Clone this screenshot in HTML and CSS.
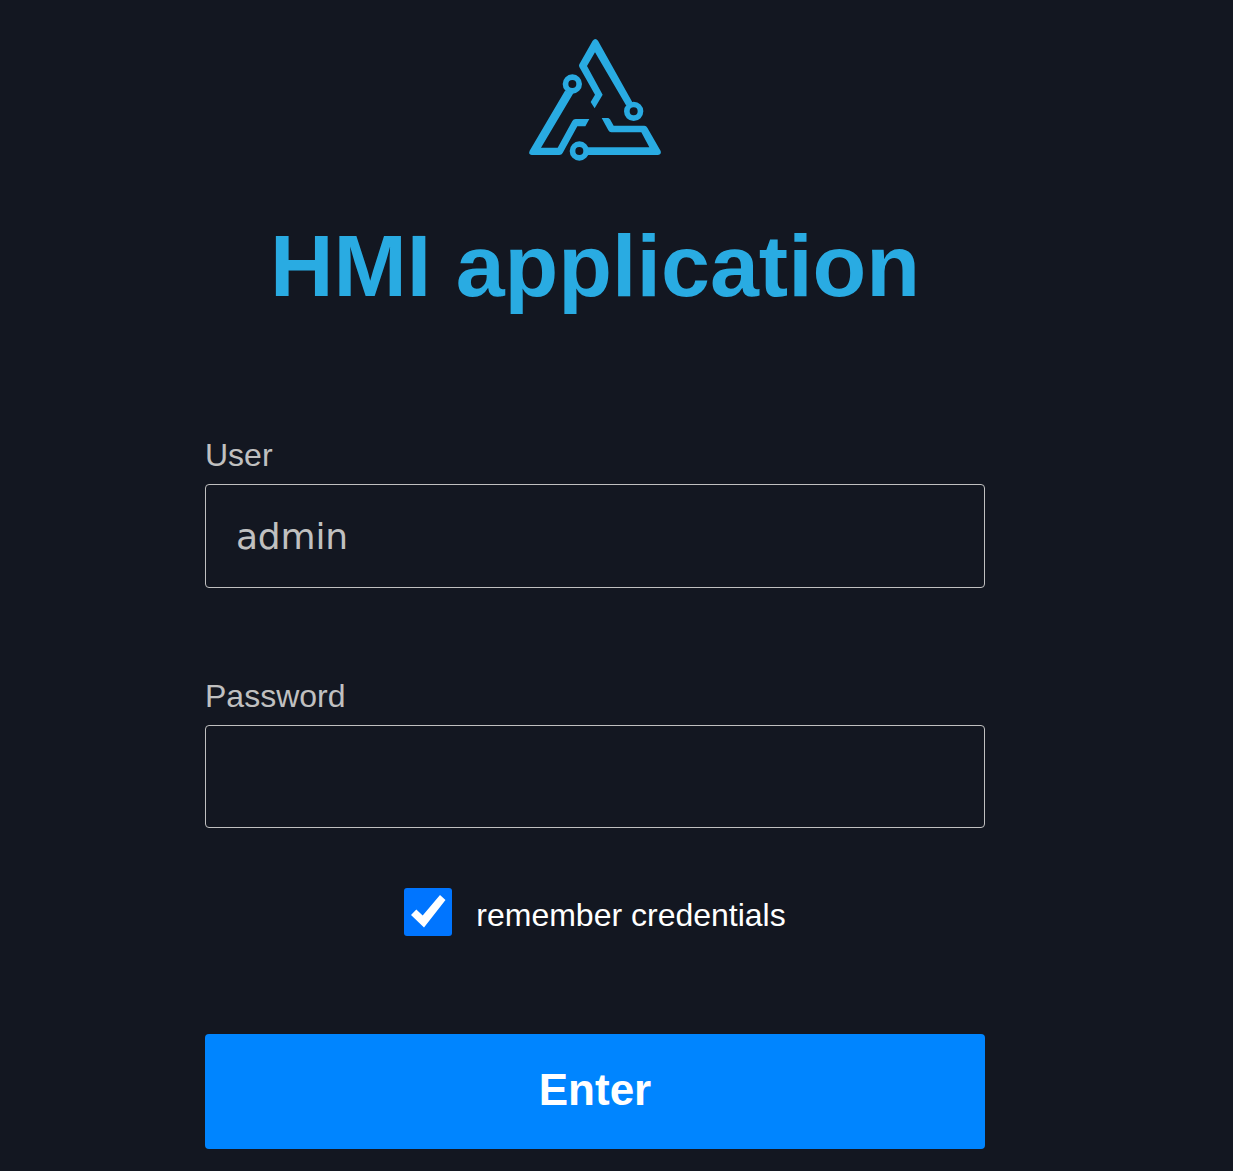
FILE: index.html
```html
<!DOCTYPE html>
<html lang="en">
<head>
<meta charset="utf-8">
<title>HMI application</title>
<link rel="stylesheet" href="styles.css">
</head>
<body>
<main class="login">
  <svg class="logo" viewBox="0 0 450 420" fill="#29abe2" aria-hidden="true">
    <path d="M218 32Q226 22 234 32L338 218 318 226 225 67 201 108 248 194 224 235Q218 226 212 216L225 194 178 111Q176 107 178 103Z"/>
    <path d="M135 182 161 188 63 353H113L157 273Q160 267 167 267H208L196 289H172L128 369Q125 375 118 375H35Q24 373 29 362Z"/>
    <path d="M200 352H388L364 307H274Q268 307 265 301L245 264H265L270 268 281 287H373Q379 287 382 293L422 363Q425 374 414 375H200Z"/>
    <g fill="#131721" stroke="#29abe2" stroke-width="17">
      <circle cx="341" cy="244" r="20.5"/>
      <circle cx="157" cy="162" r="20.5"/>
      <circle cx="178" cy="363" r="20.5"/>
    </g>
  </svg>
  <h1 class="title">HMI application</h1>
  <form class="form">
    <label class="label" for="user">User</label>
    <input class="field" id="user" type="text" value="admin">
    <label class="label label-password" for="password">Password</label>
    <input class="field field-password" id="password" type="password">
    <label class="remember">
      <svg class="check" viewBox="0 0 48 48" aria-hidden="true">
        <rect width="48" height="48" rx="3" fill="#0075ff"/>
        <path fill="#fff" d="M7 27 12.3 21.5 18.7 27.5 36 7 41.5 12 20 39.5Z"/>
      </svg>
      <span class="remember-text">remember credentials</span>
    </label>
    <button class="enter" type="button">Enter</button>
  </form>
</main>
</body>
</html>
```
FILE: styles.css
```css
* {
  box-sizing: border-box;
}

body {
  margin: 0;
  background: #131721;
  font-family: "Liberation Sans", Arial, sans-serif;
}

.login {
  display: flex;
  flex-direction: column;
  align-items: center;
  width: 780px;
  height: 1171px;
  margin-left: 205px;
  padding-top: 30px;
}

.logo {
  width: 150px;
  height: 140px;
}

.title {
  margin: 46px 0 0;
  color: #29abe2;
  font-size: 88px;
  font-weight: 700;
  line-height: 100px;
}

.form {
  display: flex;
  flex-direction: column;
  width: 100%;
  margin-top: 121px;
}

.label {
  color: #c0c0c0;
  font-size: 32px;
  line-height: 36px;
}

.label-password {
  margin-top: 90px;
}

.field {
  width: 100%;
  height: 104px;
  margin: 11px 0 0;
  padding: 0 30px;
  border: 1px solid #c0c0c0;
  border-radius: 4px;
  outline: none;
  background: transparent;
  color: #c0c0c0;
  font-family: "DejaVu Sans", Verdana, sans-serif;
  font-size: 36px;
  letter-spacing: -0.2px;
}

.field-password {
  height: 103px;
}

.remember {
  display: flex;
  align-items: center;
  justify-content: center;
  gap: 24px;
  height: 48px;
  margin-top: 60px;
  color: #fff;
  font-size: 32px;
}

.check {
  width: 48px;
  height: 48px;
}

.remember-text {
  padding-top: 6px;
  line-height: 36px;
}

.enter {
  height: 115px;
  margin-top: 98px;
  padding: 0 0 3px;
  border: 0;
  border-radius: 4px;
  background: #0085ff;
  color: #fff;
  font-family: inherit;
  font-size: 44px;
  font-weight: 700;
}
```
